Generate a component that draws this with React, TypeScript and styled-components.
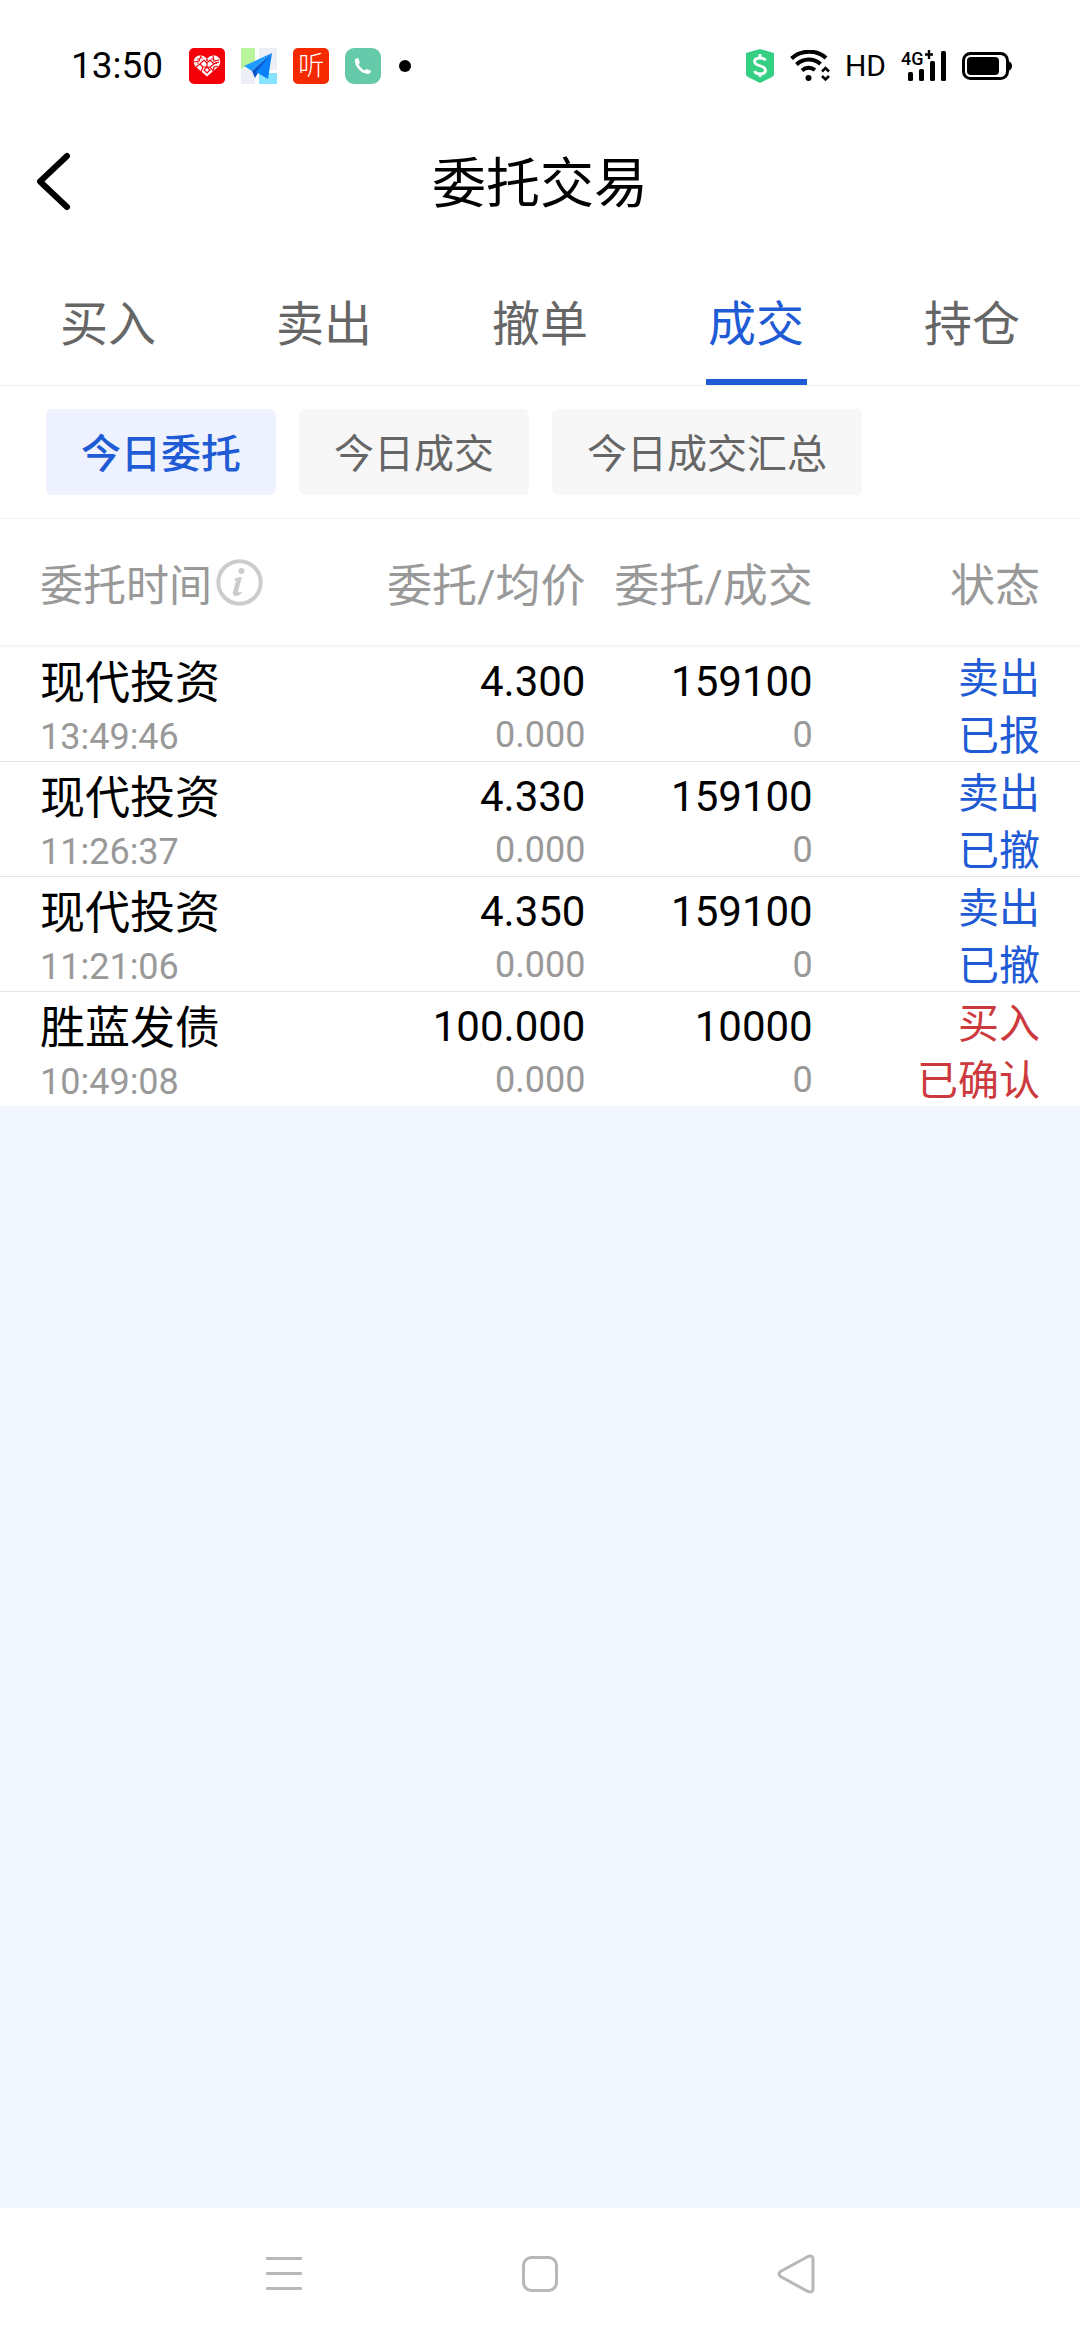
import React, { useState } from "react";
import styled, { createGlobalStyle } from "styled-components";

const BLUE = "#1f5bd5";
const RED = "#cc3a3d";

const GlobalStyle = createGlobalStyle`
  *, *::before, *::after { box-sizing: border-box; }
  html, body { margin: 0; padding: 0; }
  body {
    background: #f2f6ff;
    color: #000;
    font-family: Roboto, "Noto Sans CJK SC", sans-serif;
  }
  button {
    margin: 0;
    padding: 0;
    border: 0;
    background: none;
    color: inherit;
    font: inherit;
    cursor: pointer;
  }
`;

const Screen = styled.div`
  display: flex;
  flex-direction: column;
  min-height: 100vh;
`;

const StatusBar = styled.header`
  display: flex;
  align-items: center;
  justify-content: space-between;
  height: 132px;
  padding: 0 68px 0 71px;
  background: #fff;
`;

const StatusGroup = styled.div<{ $gap: number }>`
  display: flex;
  align-items: center;
  gap: ${(p) => p.$gap}px;
`;

const Clock = styled.time`
  margin-right: 10px;
  font-size: 37px;
  line-height: 44px;
`;

const AppBadge = styled.span<{ $bg: string; $radius: number }>`
  display: flex;
  align-items: center;
  justify-content: center;
  width: 36px;
  height: 36px;
  border-radius: ${(p) => p.$radius}px;
  background: ${(p) => p.$bg};
  color: #fff;
  font-size: 26px;
  font-weight: 300;
  line-height: 36px;
`;

const Dot = styled.span`
  width: 12px;
  height: 12px;
  margin-left: 2px;
  border-radius: 50%;
  background: #000;
`;

const HdLabel = styled.span`
  font-size: 30px;
  line-height: 36px;
`;

const TitleBar = styled.div`
  display: grid;
  grid-template-columns: 108px 1fr 108px;
  align-items: center;
  height: 128px;
  padding-bottom: 28px;
  background: #fff;
`;

const BackButton = styled.button`
  display: flex;
  align-items: center;
  height: 100px;
  padding-left: 36px;
`;

const Title = styled.h1`
  margin: 0;
  padding-top: 6px;
  font-size: 54px;
  font-weight: 400;
  line-height: 94px;
  text-align: center;
`;

const Tabs = styled.nav`
  display: grid;
  grid-template-columns: repeat(5, 1fr);
  border-bottom: 1px solid #f0f0f0;
  background: #fff;
`;

const Tab = styled.button<{ $active: boolean }>`
  display: flex;
  flex-direction: column;
  align-items: center;
  justify-content: space-between;
  height: 125px;
  padding-top: 11px;
  color: ${(p) => (p.$active ? BLUE : "#666")};
  font-size: 48px;
  line-height: 108px;

  &::after {
    content: "";
    width: 101px;
    height: 6px;
    flex: none;
    background: ${(p) => (p.$active ? BLUE : "transparent")};
  }
`;

const Filters = styled.div`
  display: flex;
  gap: 23px;
  padding: 23px 46px;
  border-bottom: 1px solid #f2f2f2;
  background: #fff;
`;

const Chip = styled.button<{ $active: boolean }>`
  padding: 6px 35px 0;
  border-radius: 6px;
  background: ${(p) => (p.$active ? "#edf2fe" : "#f7f7f7")};
  color: ${(p) => (p.$active ? BLUE : "#666")};
  font-size: 40px;
  font-weight: ${(p) => (p.$active ? 500 : 400)};
  line-height: 80px;
`;

const Orders = styled.table`
  display: block;
  width: 100%;
  background: #fff;

  thead,
  tbody {
    display: block;
  }

  tr {
    display: grid;
    grid-template-columns: 1.4fr 1fr 1fr 1fr;
    padding: 0 40px;
  }

  thead tr {
    border-bottom: 2px solid #f5f5f5;
  }

  tbody tr + tr {
    border-top: 1px solid #e6e6e6;
  }
`;

const HeadCell = styled.th<{ $left?: boolean }>`
  display: flex;
  align-items: center;
  justify-content: ${(p) => (p.$left ? "flex-start" : "flex-end")};
  height: 126px;
  padding: 0;
  color: #999;
  font-size: ${(p) => (p.$left ? 43 : 45)}px;
  font-weight: 400;
  white-space: nowrap;
`;

const InfoButton = styled.button`
  display: flex;
  margin-left: 4px;
`;

const Cell = styled.td<{ $left?: boolean }>`
  display: flex;
  flex-direction: column;
  height: 114px;
  padding: ${(p) => (p.$left ? 8 : 6)}px 0 0;
  text-align: ${(p) => (p.$left ? "left" : "right")};
  white-space: nowrap;
`;

const Name = styled.span`
  font-size: 45px;
  line-height: 58px;
`;

const Amount = styled.span`
  font-size: 42px;
  line-height: 58px;
`;

const Minor = styled.span`
  color: #999;
  font-size: 36px;
  line-height: 48px;
`;

const StatusCell = styled(Cell)<{ $tone: string }>`
  padding: 4px 0 0;
  color: ${(p) => p.$tone};
  font-size: 41px;
  line-height: 57px;
`;

const SystemNav = styled.footer`
  display: grid;
  grid-template-columns: repeat(3, 1fr);
  height: 132px;
  margin-top: auto;
  padding: 0 156px;
  background: #fff;
`;

const NavButton = styled.button`
  display: flex;
  align-items: center;
  justify-content: center;
`;

const HeartIcon = () => (
  <svg width="28" height="22" viewBox="0 0 28 22" aria-hidden="true">
    <path d="M14 21.500 2.500 11.500C-.5 8 .5 2.500 4.500 1 8-.2 11.500.8 14 4c2.500-3.200 6-4.200 9.500-3C27.500 2.500 28.500 8 25.500 11.500Z" fill="#fff" />
    <g stroke="#f40009" strokeWidth="1.200" fill="none">
      <path d="M1 7l5-1 2-5M3 12l4-3 3 3-2 5M7 9l4-4 3 3 3-3 4 4-4 3M21 9l5-2M20 1l1 5 5-1M14 8v4l-3 3 3 3 3-3-3-3M17 12l3 4 1-4 4-1M10 12h8" />
    </g>
    <g fill="#f40009">
      <circle cx="5" cy="4" r=".8" />
      <circle cx="23" cy="8" r="1" />
      <circle cx="14" cy="5" r="1" />
      <circle cx="9" cy="3" r=".8" />
      <circle cx="5" cy="8" r=".8" />
      <circle cx="19" cy="4" r=".8" />
    </g>
  </svg>
);

const PlaneIcon = () => (
  <svg width="36" height="36" viewBox="0 0 36 36" aria-hidden="true">
    <path d="M0 0h14v14L0 21Z" fill="#b9f49a" />
    <path d="M18 0h18v22H18Z" fill="#eceff5" />
    <path d="M0 21h14v15H0Z" fill="#eceff5" />
    <path d="M18 25h18v11H18Z" fill="#86e3ff" />
    <path d="M31 5 3 18l8 5Z" fill="#1e9bff" />
    <path d="M31 5 11 23l3 7 3-5Z" fill="#0a54cc" />
    <path d="M31 5 15 24l12 7Z" fill="#0b80fb" />
  </svg>
);

const PhoneIcon = () => (
  <svg width="20" height="20" viewBox="0 0 20 20" aria-hidden="true">
    <path
      d="M2 3.500Q3 2 5 2L7 6.500 5.500 8.500C7 11 8.800 12.800 11.500 14.500l2-1.500 4.500 1.800q0 2-1.500 3C10 19 1 11 2 3.500Z"
      fill="#fff"
    />
  </svg>
);

const ShieldIcon = () => (
  <svg width="30" height="36" viewBox="0 0 30 36" aria-hidden="true">
    <path d="M15 1 29 5v21q0 2-2 3L15 35 3 29q-2-1-2-3V5Z" fill="#35cf83" />
    <path d="M20.500 12.500C19 9 10 9 9.500 13.500c0 5.500 11 3 11 9C20 27 11 27 9.500 23M15 6v4M15 25v4" fill="none" stroke="#fff" strokeWidth="2.800" />
  </svg>
);

const WifiIcon = () => (
  <svg width="40" height="32" viewBox="0 0 40 32" aria-hidden="true">
    <g fill="none" stroke="#000">
      <path d="M1.500 8.500C11-.5 27-.5 36 8" strokeWidth="4" />
      <path d="M6.500 14.500c7-6.500 17-6.500 24-.5" strokeWidth="4" />
      <path d="M12 20.500c4-3.500 9-3.500 13-.5" strokeWidth="4" />
      <path d="m32 21.500 3.500-3.500 3.500 3.500M32 26l3.500 3.500L39 26" strokeWidth="2.600" />
    </g>
    <circle cx="18.500" cy="28" r="3" />
  </svg>
);

const SignalIcon = () => (
  <svg width="46" height="32" viewBox="0 0 46 32" overflow="visible" aria-hidden="true">
    <text x="0" y="15" fontFamily="Roboto, sans-serif" fontSize="18" fontWeight="500">4G</text>
    <path d="M28 0v9M24 4.500h8" stroke="#000" strokeWidth="2.400" />
    <rect x="7" y="22" width="5" height="9" rx="1.500" />
    <rect x="18" y="19" width="5" height="12" rx="1.500" />
    <rect x="29" y="11" width="5" height="20" rx="1.500" />
    <rect x="40" y="1" width="5" height="30" rx="1.500" />
  </svg>
);

const BatteryIcon = () => (
  <svg width="50" height="28" viewBox="0 0 50 28" aria-hidden="true">
    <rect x="1.500" y="1.500" width="44" height="25" rx="7" fill="none" stroke="#000" strokeWidth="3" />
    <rect x="5" y="5" width="32" height="18" rx="4" />
    <path d="M46 9q4 1 4 5t-4 5Z" />
  </svg>
);

const BackIcon = () => (
  <svg width="36" height="60" viewBox="0 0 36 60" fill="none" stroke="#000" strokeWidth="6" strokeLinecap="round" strokeLinejoin="round" aria-hidden="true">
    <path d="M31 4 4 29.500 31 55" />
  </svg>
);

const InfoIcon = () => (
  <svg width="47" height="47" viewBox="0 0 47 47" aria-hidden="true">
    <circle cx="23.500" cy="23.500" r="21.200" fill="none" stroke="#ccc" strokeWidth="4" />
    <circle cx="25.500" cy="12" r="3" fill="#ccc" />
    <path d="M17 22c2-3 5-4 9-4l-4 14q0 3 5 0-3 5-7 5-4 0-3-4l3-11q-1-2-3 0Z" fill="#ccc" />
  </svg>
);

const MenuIcon = () => (
  <svg width="36" height="34" viewBox="0 0 36 34" fill="#b8b8b8" aria-hidden="true">
    <rect width="36" height="3" rx="1" />
    <rect y="15" width="36" height="3" rx="1" />
    <rect y="30" width="36" height="3" rx="1" />
  </svg>
);

const HomeIcon = () => (
  <svg width="36" height="36" viewBox="0 0 36 36" aria-hidden="true">
    <rect x="1.500" y="1.500" width="33" height="33" rx="8" fill="none" stroke="#b8b8b8" strokeWidth="3" />
  </svg>
);

const ReturnIcon = () => (
  <svg width="38" height="40" viewBox="0 0 38 40" aria-hidden="true">
    <path d="M31 2.500 3.500 17.500Q.5 20 3.500 22.500L31 37.500Q36 39 36 35V5Q36 1 31 2.500Z" fill="none" stroke="#b8b8b8" strokeWidth="3" />
  </svg>
);

interface Order {
  name: string;
  time: string;
  price: string;
  average: string;
  quantity: string;
  filled: string;
  side: string;
  state: string;
}

const TABS = ["买入", "卖出", "撤单", "成交", "持仓"];
const FILTERS = ["今日委托", "今日成交", "今日成交汇总"];

const ORDERS: Order[] = [
  { name: "现代投资", time: "13:49:46", price: "4.300", average: "0.000", quantity: "159100", filled: "0", side: "卖出", state: "已报" },
  { name: "现代投资", time: "11:26:37", price: "4.330", average: "0.000", quantity: "159100", filled: "0", side: "卖出", state: "已撤" },
  { name: "现代投资", time: "11:21:06", price: "4.350", average: "0.000", quantity: "159100", filled: "0", side: "卖出", state: "已撤" },
  { name: "胜蓝发债", time: "10:49:08", price: "100.000", average: "0.000", quantity: "10000", filled: "0", side: "买入", state: "已确认" },
];

export default function App() {
  const [tab, setTab] = useState("成交");
  const [filter, setFilter] = useState("今日委托");

  return (
    <Screen lang="zh-CN">
      <GlobalStyle />
      <StatusBar>
        <StatusGroup $gap={16}>
          <Clock>13:50</Clock>
          <AppBadge $bg="#f40009" $radius={5}><HeartIcon /></AppBadge>
          <AppBadge $bg="#fff" $radius={0}><PlaneIcon /></AppBadge>
          <AppBadge $bg="#f52a00" $radius={5}>听</AppBadge>
          <AppBadge $bg="#64caa9" $radius={9}><PhoneIcon /></AppBadge>
          <Dot />
        </StatusGroup>
        <StatusGroup $gap={15}>
          <ShieldIcon />
          <WifiIcon />
          <HdLabel>HD</HdLabel>
          <SignalIcon />
          <BatteryIcon />
        </StatusGroup>
      </StatusBar>

      <TitleBar>
        <BackButton type="button" aria-label="返回"><BackIcon /></BackButton>
        <Title>委托交易</Title>
      </TitleBar>

      <Tabs>
        {TABS.map((label) => (
          <Tab key={label} type="button" $active={label === tab} onClick={() => setTab(label)}>
            {label}
          </Tab>
        ))}
      </Tabs>

      <Filters>
        {FILTERS.map((label) => (
          <Chip key={label} type="button" $active={label === filter} onClick={() => setFilter(label)}>
            {label}
          </Chip>
        ))}
      </Filters>

      <Orders>
        <thead>
          <tr>
            <HeadCell scope="col" $left>
              委托时间
              <InfoButton type="button" aria-label="说明"><InfoIcon /></InfoButton>
            </HeadCell>
            <HeadCell scope="col">委托/均价</HeadCell>
            <HeadCell scope="col">委托/成交</HeadCell>
            <HeadCell scope="col">状态</HeadCell>
          </tr>
        </thead>
        <tbody>
          {ORDERS.map((order) => (
            <tr key={order.time}>
              <Cell $left>
                <Name>{order.name}</Name>
                <Minor>{order.time}</Minor>
              </Cell>
              <Cell>
                <Amount>{order.price}</Amount>
                <Minor>{order.average}</Minor>
              </Cell>
              <Cell>
                <Amount>{order.quantity}</Amount>
                <Minor>{order.filled}</Minor>
              </Cell>
              <StatusCell $tone={order.side === "买入" ? RED : BLUE}>
                <span>{order.side}</span>
                <span>{order.state}</span>
              </StatusCell>
            </tr>
          ))}
        </tbody>
      </Orders>

      <SystemNav>
        <NavButton type="button" aria-label="最近任务"><MenuIcon /></NavButton>
        <NavButton type="button" aria-label="主屏幕"><HomeIcon /></NavButton>
        <NavButton type="button" aria-label="返回上一页"><ReturnIcon /></NavButton>
      </SystemNav>
    </Screen>
  );
}
